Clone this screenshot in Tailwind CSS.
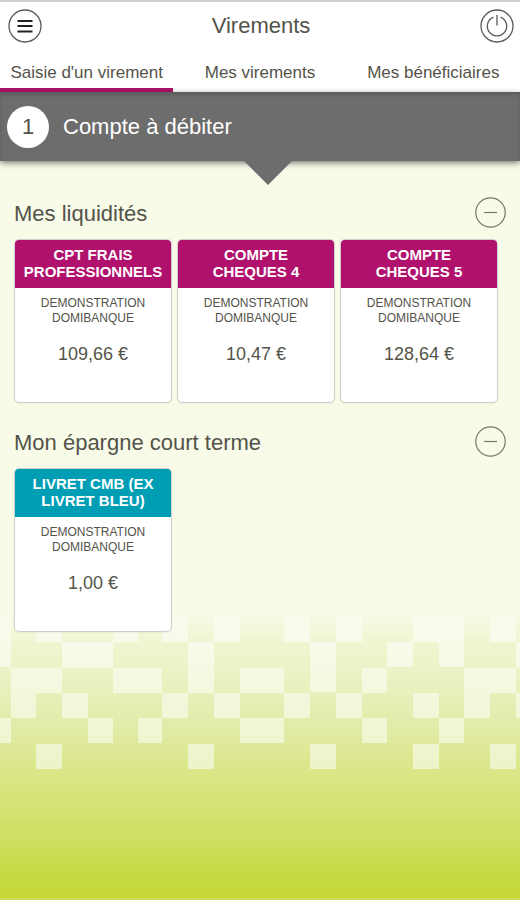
<!DOCTYPE html>
<html lang="fr">
<head>
  <meta charset="UTF-8" />
  <meta name="viewport" content="width=device-width, initial-scale=1.0"/>
  <title>Virements</title>
  <script src="https://cdn.jsdelivr.net/npm/@tailwindcss/browser@4"></script>
</head>
<body class="relative min-h-screen flex flex-col bg-[#f7fbe8] text-[#54534a] font-['Liberation_Sans',Arial,sans-serif]">

  <!-- Fond dégradé et mosaïque -->
  <div class="absolute inset-x-0 bottom-0 h-[300px] overflow-hidden border-b-2 border-[#cddd55] bg-[linear-gradient(to_bottom,#f7fbe8_0px,#f7fbe8_12px,#eff5d0_45px,#e8f0bd_92px,#e1eaa4_130px,#dce78c_165px,#d6e377_200px,#cfde60_240px,#c6d93f_280px,#c4d735_298px)]">
    <svg class="w-full h-full" viewBox="0 0 520 300" preserveAspectRatio="xMidYMin slice" aria-hidden="true">
      <defs>
        <linearGradient id="voile" gradientUnits="userSpaceOnUse" x1="0" y1="14" x2="0" y2="169">
          <stop offset="0" stop-color="#f9fcee"/>
          <stop offset="0.3" stop-color="#f6fae6"/>
          <stop offset="1" stop-color="#edf3c9"/>
        </linearGradient>
      </defs>
      <g fill="url(#voile)">
        <path d="M36 17h26v25h-26z M113 17h25v25h-25z M162 17h26v25h-26z M214 17h26v25h-26z M284 17h26v25h-26z M336 17h26v25h-26z M413 17h51v25h-51z M490 17h26v25h-26z"/>
        <path d="M0 17h11v50h-11z M62 42h51v26h-51z M188 42h26v51h-26z M310 42h26v50h-26z M387 42h26v25h-26z M439 42h25v25h-25z M516 42h4v25h-4z"/>
        <path d="M11 68h51v25h-51z M113 68h49v25h-49z M240 68h44v25h-44z M362 68h25v25h-25z M464 68h52v25h-52z"/>
        <path d="M11 93h25v25h-25z M62 93h26v25h-26z M162 93h26v25h-26z M214 93h26v25h-26z M284 93h26v25h-26z M336 93h26v25h-26z M413 93h26v25h-26z M464 93h26v25h-26z M516 93h4v25h-4z"/>
        <path d="M0 118h11v25h-11z M88 118h25v25h-25z M138 118h24v25h-24z M240 118h44v25h-44z M362 118h25v25h-25z M439 118h25v25h-25z"/>
        <path d="M36 144h26v25h-26z M188 144h26v25h-26z M310 144h26v25h-26z M413 144h26v25h-26z M490 144h26v25h-26z"/>
      </g>
    </svg>
  </div>

  <!-- En-tête -->
  <header class="relative bg-white border-t-2 border-[#cfcfcf]">
    <div class="flex items-center justify-between h-12 pl-2 pr-[6px]">
      <button type="button" aria-label="Menu">
        <svg width="34" height="34" viewBox="0 0 34 34" fill="none">
          <circle cx="17" cy="17" r="16" stroke="#5b5952" stroke-width="1.3"/>
          <path d="M9.500 12h15M9.500 17h15M9.500 22.500h15" stroke="#222" stroke-width="2.200"/>
        </svg>
      </button>
      <h1 class="text-[22px] leading-6">Virements</h1>
      <button type="button" aria-label="Déconnexion">
        <svg width="34" height="34" viewBox="0 0 34 34" fill="none" stroke="#5b5952" stroke-width="1.3" stroke-linecap="round">
          <circle cx="17" cy="17" r="16"/>
          <path d="M13 8.300a9.700 9.700 0 1 0 8 0"/>
          <path d="M17 6.500v9.500"/>
        </svg>
      </button>
    </div>
    <nav class="grid grid-cols-3 h-[42px] text-[17px] leading-5 text-center whitespace-nowrap">
      <a href="#" class="pt-[13px] border-b-4 border-[#b0116c]">Saisie d'un virement</a>
      <a href="#" class="pt-[13px]">Mes virements</a>
      <a href="#" class="pt-[13px]">Mes bénéficiaires</a>
    </nav>
  </header>

  <!-- Étape -->
  <div class="relative flex items-center gap-[14px] h-[69px] pl-[7px] bg-[#6d6d6d] text-white text-[22px] shadow-[0_2px_6px_rgba(0,0,0,0.5),inset_0_3px_4px_rgba(0,0,0,0.15)]">
    <span class="flex items-center justify-center size-[42px] rounded-full bg-white text-[#54534a]">1</span>
    <h2>Compte à débiter</h2>
    <svg class="absolute top-full left-[51.5%] -translate-x-1/2" width="48" height="24" viewBox="0 0 48 24" aria-hidden="true">
      <path d="M0 0H48L24 24Z" fill="#6d6d6d"/>
    </svg>
  </div>

  <!-- Comptes -->
  <main class="relative flex flex-col gap-[23px] pt-9 pb-8">
    <section>
      <div class="flex items-center justify-between px-[14px] mb-[11px]">
        <h3 class="text-[22px] leading-6 pt-[2px]">Mes liquidités</h3>
        <button type="button" aria-label="Replier Mes liquidités">
          <svg width="31" height="31" viewBox="0 0 31 31" fill="none" stroke="#77786c" stroke-width="1.2">
            <circle cx="15.500" cy="15.500" r="14.700"/>
            <path d="M9 15.500h13"/>
          </svg>
        </button>
      </div>
      <div class="grid grid-cols-3 gap-[5px] pl-[14px] pr-[22px] text-center">
        <button type="button" class="flex flex-col h-[164px] bg-white border border-[#cfcfcf] rounded-[5px] overflow-hidden shadow-xs">
          <span class="w-full pt-[6px] pb-2 px-1 bg-[#b0116c] text-white text-[15px] leading-[17px] font-bold">CPT FRAIS PROFESSIONNELS</span>
          <span class="w-full pt-2 px-3 text-xs leading-[15px]">DEMONSTRATION DOMIBANQUE</span>
          <span class="w-full pt-[18px] text-lg leading-5">109,66 €</span>
        </button>
        <button type="button" class="flex flex-col h-[164px] bg-white border border-[#cfcfcf] rounded-[5px] overflow-hidden shadow-xs">
          <span class="w-full pt-[6px] pb-2 px-6 bg-[#b0116c] text-white text-[15px] leading-[17px] font-bold">COMPTE CHEQUES 4</span>
          <span class="w-full pt-2 px-3 text-xs leading-[15px]">DEMONSTRATION DOMIBANQUE</span>
          <span class="w-full pt-[18px] text-lg leading-5">10,47 €</span>
        </button>
        <button type="button" class="flex flex-col h-[164px] bg-white border border-[#cfcfcf] rounded-[5px] overflow-hidden shadow-xs">
          <span class="w-full pt-[6px] pb-2 px-6 bg-[#b0116c] text-white text-[15px] leading-[17px] font-bold">COMPTE CHEQUES 5</span>
          <span class="w-full pt-2 px-3 text-xs leading-[15px]">DEMONSTRATION DOMIBANQUE</span>
          <span class="w-full pt-[18px] text-lg leading-5">128,64 €</span>
        </button>
      </div>
    </section>

    <section>
      <div class="flex items-center justify-between px-[14px] mb-[11px]">
        <h3 class="text-[22px] leading-6 pt-[2px]">Mon épargne court terme</h3>
        <button type="button" aria-label="Replier Mon épargne court terme">
          <svg width="31" height="31" viewBox="0 0 31 31" fill="none" stroke="#77786c" stroke-width="1.2">
            <circle cx="15.500" cy="15.500" r="14.700"/>
            <path d="M9 15.500h13"/>
          </svg>
        </button>
      </div>
      <div class="grid grid-cols-3 gap-[5px] pl-[14px] pr-[22px] text-center">
        <button type="button" class="flex flex-col h-[164px] bg-white border border-[#cfcfcf] rounded-[5px] overflow-hidden shadow-xs">
          <span class="w-full pt-[6px] pb-2 px-1 bg-[#009eb4] text-white text-[15px] leading-[17px] font-bold">LIVRET CMB (EX LIVRET BLEU)</span>
          <span class="w-full pt-2 px-3 text-xs leading-[15px]">DEMONSTRATION DOMIBANQUE</span>
          <span class="w-full pt-[18px] text-lg leading-5">1,00 €</span>
        </button>
      </div>
    </section>
  </main>

</body>
</html>
